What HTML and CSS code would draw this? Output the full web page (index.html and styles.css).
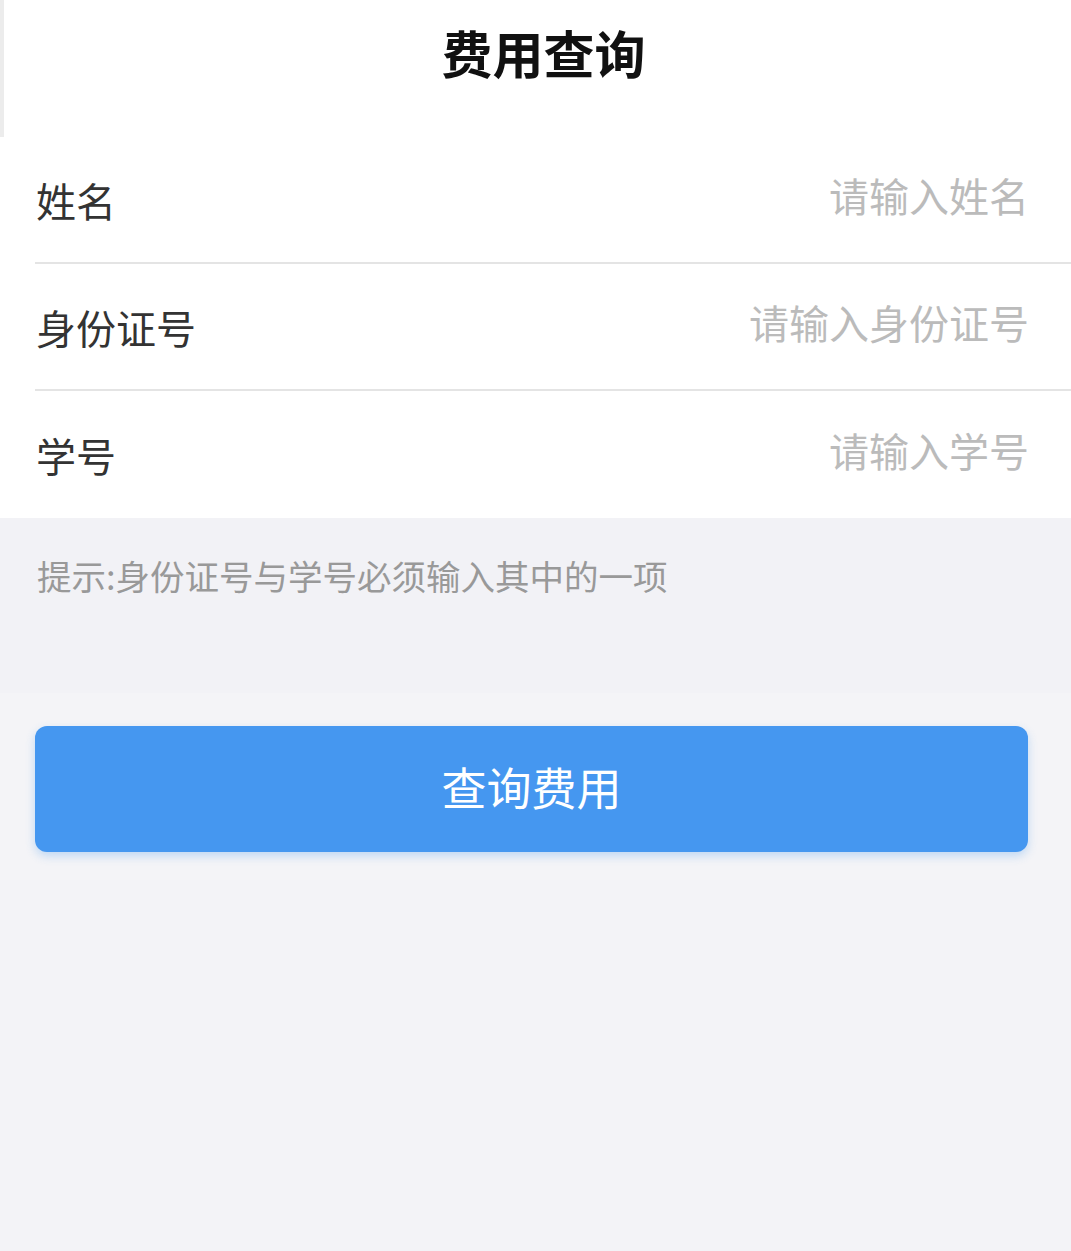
FILE: index.html
```html
<!DOCTYPE html>
<html lang="zh-CN">
<head>
<meta charset="UTF-8" />
<meta name="viewport" content="width=device-width, initial-scale=1" />
<title>费用查询</title>
<link rel="stylesheet" href="styles.css">
</head>
<body>
  <!-- Cabecera -->
  <header class="topbar">
    <h1>费用查询</h1>
  </header>

  <!-- Formulario -->
  <section class="form">
    <label class="row">
      <span class="row-label">姓名</span>
      <input type="text" placeholder="请输入姓名" autocomplete="off" />
    </label>
    <label class="row">
      <span class="row-label">身份证号</span>
      <input type="text" placeholder="请输入身份证号" autocomplete="off" />
    </label>
    <label class="row">
      <span class="row-label">学号</span>
      <input type="text" placeholder="请输入学号" autocomplete="off" />
    </label>
  </section>

  <p class="hint">提示:身份证号与学号必须输入其中的一项</p>

  <div class="actions">
    <button class="btn-query">查询费用</button>
  </div>
</body>
</html>
```

FILE: styles.css
```css
body, html {
  margin: 0; padding: 0; height: 100%;
  font-family: "Noto Sans CJK SC", "Noto Sans", sans-serif;
  background: #f3f3f7;
  color: #333;
}
.topbar {
  background: #fff;
  height: 137px;
  border-left: 4px solid #ececec;
  box-sizing: border-box;
  display: flex;
  justify-content: center;
  padding-top: 16px;
  padding-left: 12px;
}
.topbar h1 {
  margin: 0;
  font-size: 51px;
  line-height: 72px;
  font-weight: bold;
  color: #111;
}
.form {
  background: #fff;
  padding-left: 35px;
}
.row {
  display: flex;
  align-items: center;
  height: 125px;
  border-bottom: 2px solid #e4e4e4;
}
.row:last-child {
  border-bottom: none;
  height: 127px;
}
.row-label {
  font-size: 40px;
  color: #333;
  padding-left: 1px;
  white-space: nowrap;
}
.row input {
  flex: 1;
  min-width: 0;
  border: none;
  outline: none;
  background: transparent;
  text-align: right;
  font-family: inherit;
  font-size: 40px;
  color: #333;
  padding: 0 42px 10px 0;
}
.row input::placeholder {
  color: #bbb;
}
.hint {
  margin: 0;
  height: 175px;
  box-sizing: border-box;
  padding: 32px 0 0 37px;
  font-size: 34.5px;
  line-height: 50px;
  color: #999;
  background: #f2f2f6;
}
.actions {
  padding: 33px 43px 28px 35px;
  background: #f4f4f7;
}
.btn-query {
  display: block;
  width: 100%;
  height: 126px;
  border: none;
  border-radius: 12px;
  background: #4597f0;
  color: #fff;
  font-family: inherit;
  font-size: 45px;
  padding-bottom: 6px;
  box-shadow: 0 4px 10px rgba(69,151,240,0.3);
  cursor: pointer;
}
```
